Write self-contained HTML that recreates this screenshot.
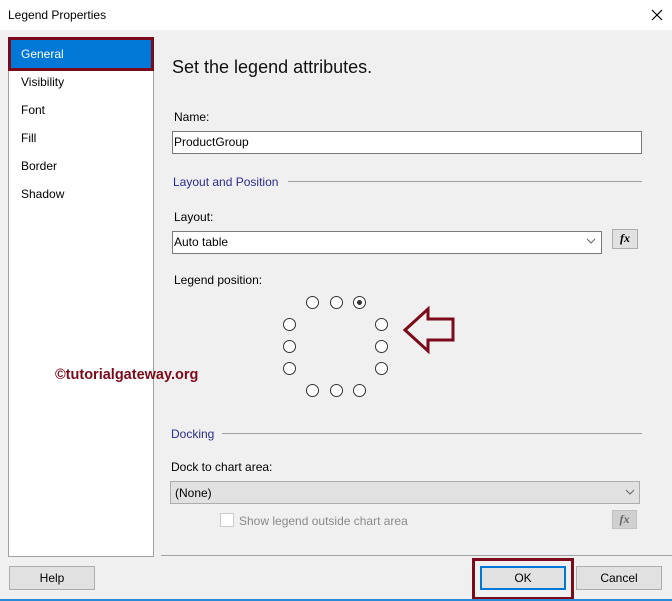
<!DOCTYPE html>
<html><head><style>
body{margin:0;width:672px;height:601px;overflow:hidden;background:#f0f0f0;font-family:"Liberation Sans",sans-serif;font-size:12px;color:#000;position:relative}
.a{position:absolute;white-space:nowrap}
.r{position:absolute;width:11px;height:11px;border:1px solid #333;border-radius:50%;background:#fff}
.btn{position:absolute;background:#e1e1e1;border:1px solid #adadad;box-sizing:border-box;text-align:center;line-height:22px}
.fx{position:absolute;background:#e1e1e1;border:1px solid #adadad;box-sizing:border-box;font:italic bold 12px "Liberation Serif",serif;text-align:center;line-height:17px}
</style></head><body>
<div class="a" style="left:0;top:0;width:672px;height:30px;background:#fff"></div>
<div class="a" style="left:8px;top:8px;font-size:12px">Legend Properties</div>

<div class="a" style="left:8px;top:37px;width:144px;height:518px;background:#fff;border:1px solid #a0a0a0"></div>
<div class="a" style="left:8px;top:37px;width:140px;height:28px;background:#0078d7;border:3px solid #7b0a1a"></div>
<div class="a" style="left:21px;top:47px;color:#fff">General</div>
<div class="a" style="left:21px;top:75px">Visibility</div>
<div class="a" style="left:21px;top:103px">Font</div>
<div class="a" style="left:21px;top:131px">Fill</div>
<div class="a" style="left:21px;top:159px">Border</div>
<div class="a" style="left:21px;top:187px">Shadow</div>

<div class="a" style="left:172px;top:57px;font-size:18px;color:#111">Set the legend attributes.</div>
<div class="a" style="left:174px;top:110px">Name:</div>
<div class="a" style="left:172px;top:131px;width:468px;height:21px;background:#fff;border:1px solid #7a7a7a"></div>
<div class="a" style="left:174px;top:135px">ProductGroup</div>
<div class="a" style="left:173px;top:175px;color:#2b2b8c">Layout and Position</div>
<div class="a" style="left:288px;top:181px;width:354px;height:1px;background:#a0a0a0"></div>
<div class="a" style="left:174px;top:210px">Layout:</div>
<div class="a" style="left:172px;top:231px;width:428px;height:21px;background:#fff;border:1px solid #7a7a7a"></div>
<div class="a" style="left:174px;top:235px">Auto table</div>
<div class="fx" style="left:612px;top:229px;width:26px;height:20px">fx</div>
<div class="a" style="left:174px;top:273px">Legend position:</div>

<div class="r" style="left:306px;top:296px"></div>
<div class="r" style="left:330px;top:296px"></div>
<div class="r" style="left:353px;top:296px"></div>
<div class="a" style="left:357px;top:300px;width:5px;height:5px;border-radius:50%;background:#333"></div>
<div class="r" style="left:283px;top:318px"></div>
<div class="r" style="left:283px;top:340px"></div>
<div class="r" style="left:283px;top:362px"></div>
<div class="r" style="left:375px;top:318px"></div>
<div class="r" style="left:375px;top:340px"></div>
<div class="r" style="left:375px;top:362px"></div>
<div class="r" style="left:306px;top:384px"></div>
<div class="r" style="left:330px;top:384px"></div>
<div class="r" style="left:353px;top:384px"></div>

<div class="a" style="left:55px;top:367px;font-weight:bold;font-size:14.5px;color:#7b0a1a">©tutorialgateway.org</div>

<div class="a" style="left:171px;top:427px;color:#2b2b8c">Docking</div>
<div class="a" style="left:222px;top:433px;width:420px;height:1px;background:#a0a0a0"></div>
<div class="a" style="left:171px;top:460px">Dock to chart area:</div>
<div class="a" style="left:170px;top:481px;width:468px;height:21px;background:#e1e1e1;border:1px solid #adadad"></div>
<div class="a" style="left:175px;top:486px">(None)</div>
<div class="a" style="left:220px;top:513px;width:12px;height:12px;background:#fff;border:1px solid #ccc"></div>
<div class="a" style="left:239px;top:514px;color:#8a8a8a">Show legend outside chart area</div>
<div class="fx" style="left:612px;top:510px;width:25px;height:19px;background:#d0d0d0;border-color:#c0c0c0;color:#666">fx</div>

<svg class="a" style="left:0;top:0;z-index:5" width="672" height="601">
<polygon points="405,330 428,309 428,319 453,319 453,340 428,340 428,351" fill="none" stroke="#7b0a1a" stroke-width="3"/>
<path d="M652 10 L662 20 M662 10 L652 20" stroke="#000" stroke-width="1.2"/>
<path d="M587 239 L591 243 L595 239" fill="none" stroke="#666"/>
<path d="M626 490 L630 494 L634 490" fill="none" stroke="#666"/>
</svg>

<div class="a" style="left:161px;top:555px;width:511px;height:1px;background:#a0a0a0"></div>
<div class="btn" style="left:9px;top:566px;width:86px;height:24px">Help</div>
<div class="a" style="left:472px;top:558px;width:96px;height:36px;border:3px solid #7b0a1a"></div>
<div class="btn" style="left:480px;top:566px;width:86px;height:24px;border:2px solid #0078d7;line-height:20px">OK</div>
<div class="btn" style="left:576px;top:566px;width:86px;height:24px">Cancel</div>
<div class="a" style="left:0;top:599px;width:672px;height:2px;background:#2b8ad8"></div>
</body></html>
